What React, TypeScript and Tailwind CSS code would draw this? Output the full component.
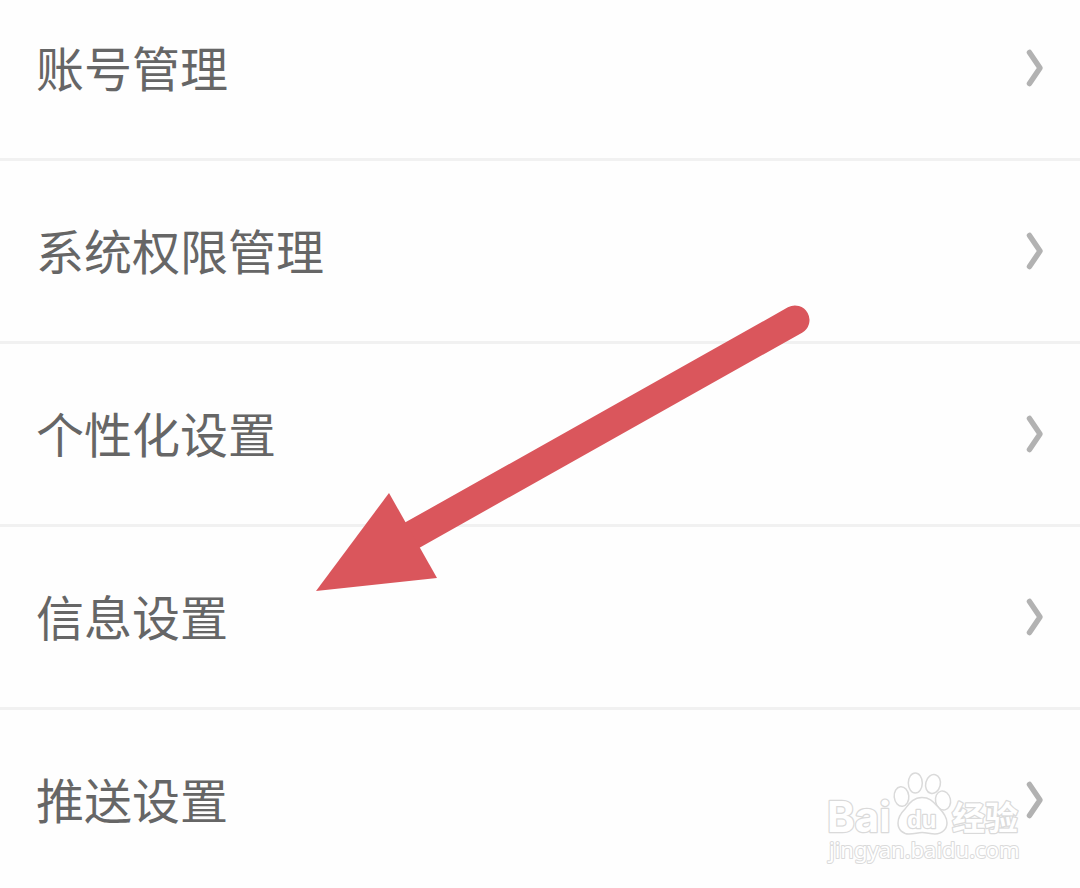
const rows = ['账号管理', '系统权限管理', '个性化设置', '信息设置', '推送设置'];

function Chevron() {
  return (
    <svg className="h-10 w-5" viewBox="0 0 20 40" fill="none" aria-hidden="true">
      <path d="M5.5 4.5 L16 20 L5.5 35.5" stroke="#b2b2b2" strokeWidth="5.5" strokeLinecap="round" strokeLinejoin="round" />
    </svg>
  );
}

function Arrow() {
  return (
    <svg
      className="pointer-events-none absolute left-[316px] top-[304px] h-[288px] w-[496px]"
      viewBox="316 304 496 288"
      aria-hidden="true"
    >
      <path d="M795 320 L400 542" stroke="#da565c" strokeWidth="29" strokeLinecap="round" />
      <path d="M316 591 L389 493 L437 578 Z" fill="#da565c" />
    </svg>
  );
}

function Watermark() {
  return (
    <svg
      className="pointer-events-none absolute left-[824px] top-[768px] h-[100px] w-[204px]"
      viewBox="824 768 204 100"
      fill="#fff"
      stroke="#dadada"
      strokeWidth="1.5"
      strokeLinejoin="round"
    >
      {/* paw */}
      <ellipse cx="901.5" cy="796.5" rx="7.3" ry="9.8" transform="rotate(-6 901.5 796.5)" />
      <ellipse cx="915.3" cy="783" rx="7" ry="10" />
      <ellipse cx="933" cy="784" rx="7.3" ry="9.6" transform="rotate(14 933 784)" />
      <ellipse cx="943" cy="800.5" rx="7.5" ry="9.6" transform="rotate(-12 943 800.5)" />
      <path d="M922 797.5 C913 797.5 909 804 905 809 C900 814 898 818 898 823 C898 830 903 834 909 834 C914 834 918 832.5 922 832.5 C927 832.5 930 834 935 834 C942 834 947 829 947 823 C947 817 944 813 939 808 C934 803 931 797.5 922 797.5 Z" />
      {/* wordmark */}
      <g paintOrder="stroke" strokeWidth="2.5">
        <text x="827" y="832" className="font-['Inter',sans-serif] text-[42px] font-bold">Bai</text>
        <text x="907" y="828" className="font-['Liberation_Sans',sans-serif] text-[24px] font-bold">du</text>
        <text x="952" y="830" className="font-['Noto_Sans_CJK_SC',sans-serif] text-[33px] font-bold">经验</text>
        <text x="829" y="858" strokeWidth="2" className="font-['Noto_Sans',sans-serif] text-[22px]">jingyan.baidu.com</text>
      </g>
    </svg>
  );
}

export default function App() {
  return (
    <main className="relative min-h-screen overflow-hidden bg-[#fefefe] font-['Noto_Sans_CJK_SC',sans-serif]">
      <ul className="-mt-[22px]">
        {rows.map((label) => (
          <li key={label} className="border-b-3 border-[#f1f1f1] last:border-b-0">
            <a href="#" className="flex h-[180px] items-center justify-between px-9 text-5xl text-[#666]">
              <span className="pb-1">{label}</span>
              <Chevron />
            </a>
          </li>
        ))}
      </ul>
      <Arrow />
      <Watermark />
    </main>
  );
}
